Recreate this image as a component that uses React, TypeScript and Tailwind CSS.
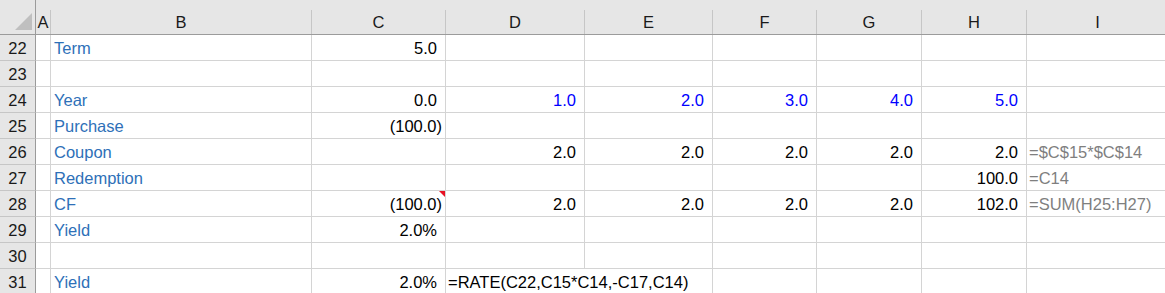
import React from 'react';

type Cell = {
  v: string;
  kind?: 'label' | 'num' | 'neg' | 'year' | 'formula' | 'expr';
  note?: boolean;
  span?: number;
};

type Row = { n: number; cells: Record<string, Cell> };

const COLS = ['A', 'B', 'C', 'D', 'E', 'F', 'G', 'H', 'I'];

const rows: Row[] = [
  { n: 22, cells: { B: { v: 'Term', kind: 'label' }, C: { v: '5.0', kind: 'num' } } },
  { n: 23, cells: {} },
  {
    n: 24,
    cells: {
      B: { v: 'Year', kind: 'label' },
      C: { v: '0.0', kind: 'num' },
      D: { v: '1.0', kind: 'year' },
      E: { v: '2.0', kind: 'year' },
      F: { v: '3.0', kind: 'year' },
      G: { v: '4.0', kind: 'year' },
      H: { v: '5.0', kind: 'year' },
    },
  },
  { n: 25, cells: { B: { v: 'Purchase', kind: 'label' }, C: { v: '(100.0)', kind: 'neg' } } },
  {
    n: 26,
    cells: {
      B: { v: 'Coupon', kind: 'label' },
      D: { v: '2.0', kind: 'num' },
      E: { v: '2.0', kind: 'num' },
      F: { v: '2.0', kind: 'num' },
      G: { v: '2.0', kind: 'num' },
      H: { v: '2.0', kind: 'num' },
      I: { v: '=$C$15*$C$14', kind: 'formula' },
    },
  },
  {
    n: 27,
    cells: {
      B: { v: 'Redemption', kind: 'label' },
      H: { v: '100.0', kind: 'num' },
      I: { v: '=C14', kind: 'formula' },
    },
  },
  {
    n: 28,
    cells: {
      B: { v: 'CF', kind: 'label' },
      C: { v: '(100.0)', kind: 'neg', note: true },
      D: { v: '2.0', kind: 'num' },
      E: { v: '2.0', kind: 'num' },
      F: { v: '2.0', kind: 'num' },
      G: { v: '2.0', kind: 'num' },
      H: { v: '102.0', kind: 'num' },
      I: { v: '=SUM(H25:H27)', kind: 'formula' },
    },
  },
  { n: 29, cells: { B: { v: 'Yield', kind: 'label' }, C: { v: '2.0%', kind: 'num' } } },
  { n: 30, cells: {} },
  {
    n: 31,
    cells: {
      B: { v: 'Yield', kind: 'label' },
      C: { v: '2.0%', kind: 'num' },
      D: { v: '=RATE(C22,C15*C14,-C17,C14)', kind: 'expr', span: 2 },
    },
  },
];

const gridCols =
  'grid grid-cols-[36px_15px_261px_134px_139px_128px_104px_105px_105px_142px]';

const kindClass: Record<string, string> = {
  label: 'text-left pl-[3px] text-[#2e70b8]',
  num: 'text-right pr-[8px] text-black',
  neg: 'text-right pr-[3px] text-black',
  year: 'text-right pr-[8px] text-[#0000ff]',
  formula: 'text-left pl-[2px] text-[#7f7f7f]',
  expr: 'text-left pl-[2px] text-black',
};

function DataCell({ cell }: { cell?: Cell }) {
  if (!cell) {
    return <div className="h-[26px] border-r border-b border-[#d4d4d4]" />;
  }
  return (
    <div
      className={`relative h-[26px] border-r border-b border-[#d4d4d4] pt-[2px] leading-[23px] whitespace-nowrap ${
        kindClass[cell.kind ?? 'num']
      } ${cell.span === 2 ? 'col-span-2' : ''}`}
    >
      {cell.v}
      {cell.note && (
        <svg className="absolute right-0 top-0" width="6" height="6" viewBox="0 0 6 6">
          <polygon points="0,0 6,0 6,6" fill="#e81123" />
        </svg>
      )}
    </div>
  );
}

export default function App() {
  return (
    <div
      className="w-[1165px] h-[293px] overflow-hidden bg-white text-[16.5px]"
      style={{ fontFamily: '"Liberation Sans", Arial, sans-serif' }}
    >
      {/* Column headers */}
      <div className={`${gridCols} h-[35px] bg-[#e6e6e6] border-b border-[#9b9b9b]`}>
        <div className="flex items-end justify-end pr-[2px] pb-[3px] border-r border-[#9b9b9b] h-[34px]">
          <svg width="18" height="18" viewBox="0 0 18 18">
            <polygon points="17,0 17,17 0,17" fill="#bfbfbf" />
          </svg>
        </div>
        {COLS.map((c) => (
          <div
            key={c}
            className="mt-[10px] h-[24px] border-r border-[#c6c6c6] text-center leading-[24px] text-[#1a1a1a]"
          >
            {c}
          </div>
        ))}
      </div>

      {/* Rows */}
      {rows.map((row) => {
        const cells: React.ReactNode[] = [];
        let skip = 0;
        COLS.forEach((c) => {
          if (skip > 0) {
            skip--;
            return;
          }
          const cell = row.cells[c];
          if (cell?.span) skip = cell.span - 1;
          cells.push(<DataCell key={c} cell={cell} />);
        });
        return (
          <div key={row.n} className={gridCols}>
            <div className="h-[26px] bg-[#e6e6e6] border-r border-b border-r-[#9b9b9b] border-b-[#c6c6c6] text-center pt-[2px] leading-[23px] text-[#1a1a1a]">
              {row.n}
            </div>
            {cells}
          </div>
        );
      })}
    </div>
  );
}
